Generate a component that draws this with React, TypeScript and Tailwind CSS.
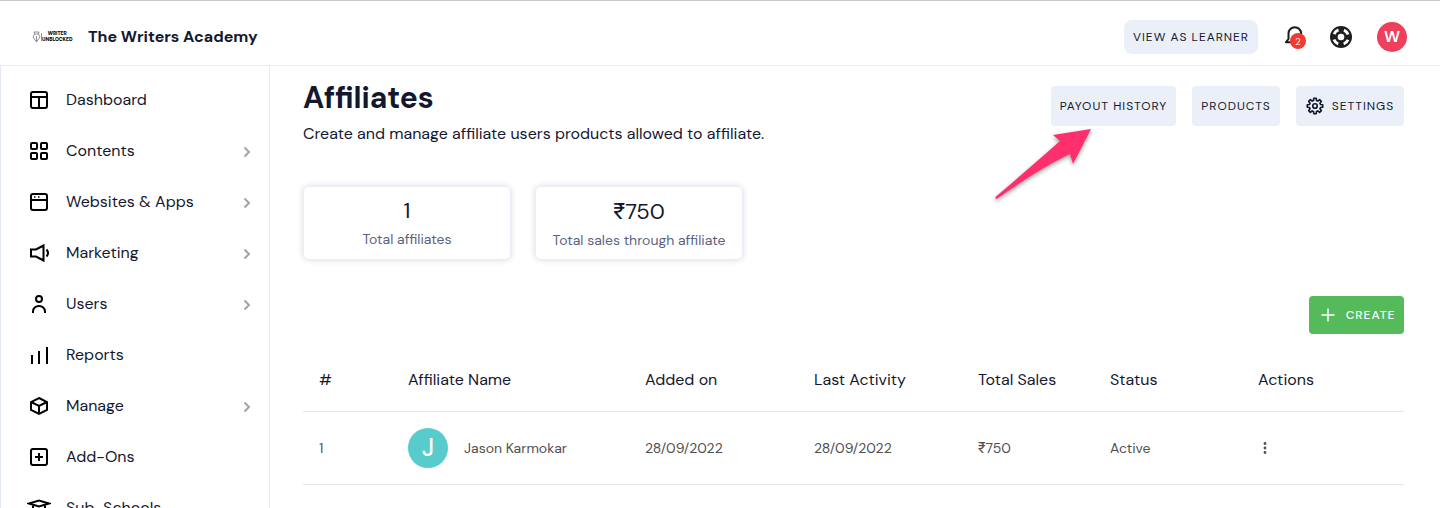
import { ReactNode } from "react";

type NavEntry = { label: string; icon: ReactNode; expandable?: boolean };

const NAV: NavEntry[] = [
  {
    label: "Dashboard",
    icon: (
      <>
        <rect x="4" y="4" width="16" height="16" rx="2" />
        <path d="M4 9h16M12 9v11" />
      </>
    ),
  },
  {
    label: "Contents",
    expandable: true,
    icon: (
      <>
        <rect x="4" y="4" width="6" height="6" rx="1" />
        <rect x="14" y="4" width="6" height="6" rx="1" />
        <rect x="4" y="14" width="6" height="6" rx="1" />
        <rect x="14" y="14" width="6" height="6" rx="1" />
      </>
    ),
  },
  {
    label: "Websites & Apps",
    expandable: true,
    icon: (
      <>
        <rect x="4" y="4" width="16" height="16" rx="2" />
        <path d="M4 10h16" />
        <path d="M7 7h1.500M11 7h1.500" strokeWidth="1.500" />
      </>
    ),
  },
  {
    label: "Marketing",
    expandable: true,
    icon: (
      <>
        <path d="M4 8.500h5L16.500 4.500v15L9 15.500H4z" />
        <path d="M19.500 8.500q3 3.500 0 7" />
      </>
    ),
  },
  {
    label: "Users",
    expandable: true,
    icon: (
      <>
        <circle cx="12" cy="7" r="3" />
        <path d="M6 21v-1.500a6 5.500 0 0 1 12 0V21" />
      </>
    ),
  },
  { label: "Reports", icon: <path d="M5 21V12M12 21V8M20 21V4" /> },
  {
    label: "Manage",
    expandable: true,
    icon: (
      <>
        <path d="M12 4l8 4v8l-8 4-8-4V8z" />
        <path d="M4 8l8 4 8-4M12 12v8" />
      </>
    ),
  },
  {
    label: "Add-Ons",
    icon: (
      <>
        <rect x="4" y="4" width="16" height="16" rx="2" />
        <path d="M12 8v8M8 12h8" />
      </>
    ),
  },
  {
    label: "Sub-Schools",
    icon: (
      <>
        <path d="M2 7.500L12 4.500l10 3-10 3z" />
        <path d="M6 9.500V17q6 4 12 0V9.500" />
      </>
    ),
  },
];

const STATS = [
  { value: "1", label: "Total affiliates" },
  { value: "₹750", label: "Total sales through affiliate" },
];

const COLUMNS = [
  { title: "#", width: "w-[89px]" },
  { title: "Affiliate Name", width: "w-[237px]" },
  { title: "Added on", width: "w-[169px]" },
  { title: "Last Activity", width: "w-[164px]" },
  { title: "Total Sales", width: "w-[132px]" },
  { title: "Status", width: "w-[148px]" },
  { title: "Actions", width: "w-[162px]" },
];

const AFFILIATES = [
  { id: 1, name: "Jason Karmokar", added: "28/09/2022", lastActivity: "28/09/2022", sales: "₹750", status: "Active" },
];

const softBtn = "flex items-center justify-center bg-[#ebeff8] text-xs tracking-[1px] text-[#14182f]";

// eight teeth, four corners each
const GEAR_POINTS = Array.from({ length: 8 }, (_, i) =>
  [[-15, 7.6], [-9, 10.4], [9, 10.4], [15, 7.6]].map(([deg, r]) => {
    const a = ((i * 45 + deg) * Math.PI) / 180;
    return `${(12 + r * Math.sin(a)).toFixed(2)},${(12 - r * Math.cos(a)).toFixed(2)}`;
  }).join(" "),
).join(" ");

function Logo() {
  return (
    <a href="#" aria-label="Writer Unblocked" className="flex w-10 items-center text-black">
      <svg viewBox="0 0 10 12" className="h-3 w-[10px] shrink-0" fill="none" stroke="#777" strokeWidth="0.8">
        <path d="M2 1h5L6.500 3h-4zM2.500 3L1 6l3.500 5L8 6 6.500 3M4.500 5v6" />
        <path d="M9.500 2v8" />
      </svg>
      <span className="text-center text-[5px] leading-[6px] font-black">
        WRITER
        <br />
        UNBLOCKED
      </span>
    </a>
  );
}

// the rupee sign comes from Inter, the digits stay in the page font
function Amount({ value }: { value: string }) {
  if (!value.startsWith("₹")) return <>{value}</>;
  return (
    <>
      <span className="font-['Inter',sans-serif]">₹</span>
      {value.slice(1)}
    </>
  );
}

function Header() {
  return (
    <header className="flex h-[66px] shrink-0 items-center border-t border-b border-t-[#c8c8c8] border-b-[#e9ebef] pt-2 pr-[33px] pl-8">
      <Logo />
      <span className="ml-4 text-base font-bold">The Writers Academy</span>
      <div className="ml-auto flex items-center">
        <button className={`${softBtn} h-[34px] w-[134px] rounded-lg`}>VIEW AS LEARNER</button>
        <button aria-label="Notifications" className="relative ml-6 size-6">
          <svg viewBox="0 0 24 24" className="size-6" fill="none" stroke="#1c1c1c" strokeWidth="2" strokeLinejoin="round">
            <path d="M6.500 14V8.500a6.300 6.300 0 0 1 12.600 0V14l2 3.200H4z" />
          </svg>
          <span className="absolute top-2 left-2 flex size-4 items-center justify-center rounded-full bg-[#f23a32] text-[10px] font-light text-white">
            2
          </span>
        </button>
        <button aria-label="Help" className="ml-[23px]">
          <svg viewBox="0 0 24 24" className="size-6" fill="none">
            <circle cx="12" cy="12" r="11" fill="#1f1f1f" />
            <circle cx="12" cy="12" r="3.300" fill="#fff" />
            <circle cx="12" cy="12" r="7.500" stroke="#fff" strokeWidth="2.800" strokeDasharray="6.200 5.581" strokeDashoffset="-2.790" />
          </svg>
        </button>
        <button className="ml-6 flex size-[30px] items-center justify-center rounded-full bg-[#ee3f5c] text-base font-semibold text-white">
          W
        </button>
      </div>
    </header>
  );
}

function Sidebar() {
  return (
    <nav className="w-[270px] shrink-0 overflow-hidden border-r border-l border-r-[#e9ebf0] border-l-[#e4e9f7] pt-2">
      {NAV.map((item) => (
        <a key={item.label} href="#" className="flex h-[51px] items-center pr-4 pl-[26px]">
          <svg viewBox="0 0 24 24" className="size-6" fill="none" stroke="#000" strokeWidth="2">
            {item.icon}
          </svg>
          <span className="ml-[15px] text-base">{item.label}</span>
          {item.expandable && (
            <svg viewBox="0 0 12 12" className="mt-[3px] ml-auto size-3" fill="none" stroke="#a3a3a3" strokeWidth="2">
              <path d="M3.500 1.500L8 6l-4.500 4.500" />
            </svg>
          )}
        </a>
      ))}
    </nav>
  );
}

function PayoutPointer() {
  return (
    <svg
      viewBox="0 0 104 84"
      className="pointer-events-none absolute top-10 -left-14 h-[84px] w-[104px] overflow-visible drop-shadow-[0_2px_2px_rgba(0,0,0,0.4)]"
      fill="#ff2f6e"
    >
      <path d="M96 3L58 9l7 6Q38 39 1 70.500q-1.500 2 .8 2.500Q45 42 75 28l3 10z" />
    </svg>
  );
}

function AffiliateTable() {
  return (
    <table className="mt-4 w-full table-fixed text-left">
      <thead>
        <tr className="h-[61px] border-b border-[#e3e6ef]">
          {COLUMNS.map((c) => (
            <th key={c.title} className={`${c.width} px-4 text-base font-normal`}>{c.title}</th>
          ))}
        </tr>
      </thead>
      <tbody>
        {AFFILIATES.map((a) => (
          <tr key={a.id} className="h-[73px] border-b border-[#e3e6ef] text-sm text-[#505050]">
            <td className="px-4">{a.id}</td>
            <td className="px-4">
              <div className="flex items-center gap-4">
                <span className="flex size-10 shrink-0 items-center justify-center rounded-full bg-[#58cccc] text-2xl font-medium text-white">
                  {a.name[0]}
                </span>
                {a.name}
              </div>
            </td>
            <td className="px-4">{a.added}</td>
            <td className="px-4">{a.lastActivity}</td>
            <td className="px-4"><Amount value={a.sales} /></td>
            <td className="px-4">{a.status}</td>
            <td className="px-4">
              <button aria-label={`Actions for ${a.name}`} className="flex w-[14px] justify-center">
                <svg viewBox="0 0 4 14" className="h-[14px] w-1" fill="#505050">
                  <circle cx="2" cy="2.500" r="1.400" />
                  <circle cx="2" cy="7" r="1.400" />
                  <circle cx="2" cy="11.500" r="1.400" />
                </svg>
              </button>
            </td>
          </tr>
        ))}
      </tbody>
    </table>
  );
}

export default function App() {
  return (
    <div className="flex h-screen flex-col overflow-hidden bg-white font-['DM_Sans','Inter',sans-serif] text-[#14182f]">
      <Header />
      <div className="flex min-h-0 flex-1">
        <Sidebar />
        <main className="min-w-0 flex-1 pt-3 pr-9 pl-[33px]">
          <div className="flex items-start justify-between">
            <div>
              <h1 className="text-3xl leading-10 font-bold">Affiliates</h1>
              <p className="mt-1 text-base">Create and manage affiliate users products allowed to affiliate.</p>
            </div>
            <div className="mt-2 flex gap-4">
              <div className="relative">
                <button className={`${softBtn} h-10 w-[125px] rounded`}>PAYOUT HISTORY</button>
                <PayoutPointer />
              </div>
              <button className={`${softBtn} h-10 w-[88px] rounded`}>PRODUCTS</button>
              <button className={`${softBtn} h-10 w-[108px] gap-2 rounded`}>
                <svg viewBox="0 0 24 24" className="size-[18px]" fill="none" stroke="currentColor" strokeWidth="2.200" strokeLinejoin="round">
                  <circle cx="12" cy="12" r="3" />
                  <polygon points={GEAR_POINTS} />
                </svg>
                SETTINGS
              </button>
            </div>
          </div>

          <div className="mt-10 flex gap-6">
            {STATS.map((s) => (
              <div
                key={s.label}
                className="flex h-[74px] w-[208px] flex-col items-center rounded-md border border-[#ebeef8] pt-2 shadow-[0_0_6px_rgba(0,0,0,0.15)]"
              >
                <span className="text-[22px] leading-8"><Amount value={s.value} /></span>
                <span className="text-sm leading-6 text-[#5b6383]">{s.label}</span>
              </div>
            ))}
          </div>

          <div className="mt-9 flex justify-end">
            <button className="flex h-[38px] w-[95px] items-center justify-center gap-2 rounded bg-[#55bb5a] text-xs font-medium tracking-[1px] text-white">
              <svg viewBox="0 0 20 20" className="size-5" fill="none" stroke="currentColor" strokeWidth="1.500">
                <path d="M10 3.500v13M3.500 10h13" />
              </svg>
              CREATE
            </button>
          </div>

          <AffiliateTable />
        </main>
      </div>
    </div>
  );
}
